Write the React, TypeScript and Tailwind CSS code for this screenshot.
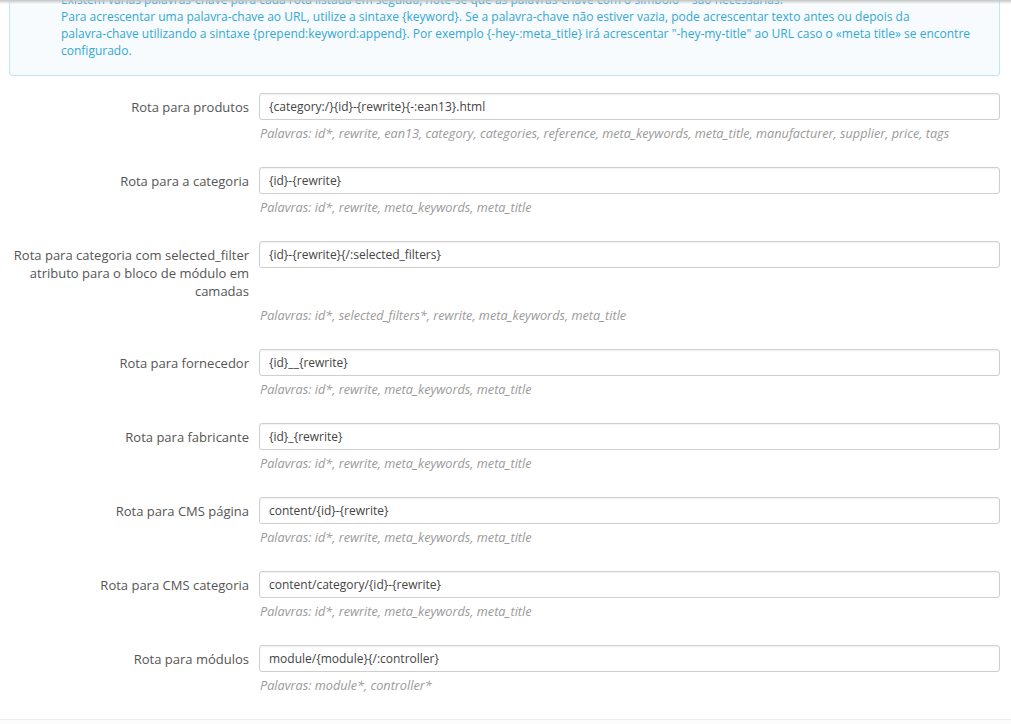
const routes = [
  {
    label: "Rota para produtos",
    value: "{category:/}{id}-{rewrite}{-:ean13}.html",
    help: "Palavras: id*, rewrite, ean13, category, categories, reference, meta_keywords, meta_title, manufacturer, supplier, price, tags",
  },
  {
    label: "Rota para a categoria",
    value: "{id}-{rewrite}",
    help: "Palavras: id*, rewrite, meta_keywords, meta_title",
  },
  {
    label: "Rota para categoria com selected_filter atributo para o bloco de módulo em camadas",
    value: "{id}-{rewrite}{/:selected_filters}",
    help: "Palavras: id*, selected_filters*, rewrite, meta_keywords, meta_title",
  },
  {
    label: "Rota para fornecedor",
    value: "{id}__{rewrite}",
    help: "Palavras: id*, rewrite, meta_keywords, meta_title",
  },
  {
    label: "Rota para fabricante",
    value: "{id}_{rewrite}",
    help: "Palavras: id*, rewrite, meta_keywords, meta_title",
  },
  {
    label: "Rota para CMS página",
    value: "content/{id}-{rewrite}",
    help: "Palavras: id*, rewrite, meta_keywords, meta_title",
  },
  {
    label: "Rota para CMS categoria",
    value: "content/category/{id}-{rewrite}",
    help: "Palavras: id*, rewrite, meta_keywords, meta_title",
  },
  {
    label: "Rota para módulos",
    value: "module/{module}{/:controller}",
    help: "Palavras: module*, controller*",
  },
];

const Nw = ({ children }: { children: string }) => <span className="whitespace-nowrap">{children}</span>;

export default function App() {
  return (
    <div className="relative h-[724px] w-[1011px] overflow-hidden bg-white font-['Open_Sans',sans-serif] text-[12px] text-[#555]">
      {/* header shadow */}
      <div className="pointer-events-none absolute inset-x-0 top-0 z-10 h-[4px] bg-gradient-to-b from-[#c4c4c4] to-[#c4c4c4]/0" />

      <div className="ml-[9px] mr-[11px] -mt-[25px] rounded-[3px] border border-[#bfe6f2] bg-[#f7fbfd] pb-[16px] pl-[51px] pr-[20px] pt-[15px] text-[12px] leading-[17px] text-[#33a8d2]">
        <p>
          Existem várias palavras-chave para cada rota listada em seguida, note-se que as palavras-chave com o símbolo * são necessárias.
        </p>
        <p>
          Para acrescentar uma <Nw>palavra-chave</Nw> ao URL, utilize a sintaxe {"{keyword}"}. Se a <Nw>palavra-chave</Nw> não estiver vazia, pode acrescentar texto antes ou depois da <Nw>palavra-chave</Nw> utilizando a sintaxe {"{prepend:keyword:append}"}. Por exemplo <Nw>{"{-hey-:meta_title}"}</Nw> irá acrescentar <Nw>"-hey-my-title"</Nw> ao URL caso o «meta title» se encontre configurado.
        </p>
      </div>

      <div className="mt-[17px]">
        {routes.map((r) => (
          <div key={r.label} className="mb-[25px]">
            <div className="flex">
              <label className="w-[259px] shrink-0 pb-[2px] pl-[12px] pr-[10px] pt-[5px] text-right text-[13px] leading-[18px] text-[#555]">
                {r.label}
              </label>
              <input
                readOnly
                value={r.value}
                className="h-[27px] w-[741px] rounded-[3px] border border-[#cfcfcf] bg-white px-[9px] text-[12px] text-[#444] shadow-[inset_0_1px_2px_rgba(0,0,0,0.06)] outline-none"
              />
            </div>
            <p className="ml-[260px] mt-[4px] text-[12.7px] italic leading-[18px] text-[#9a9a9a]">{r.help}</p>
          </div>
        ))}
      </div>

      <div className="h-[20px] border-t border-[#ececec] bg-[#fcfcfc]" />
    </div>
  );
}
